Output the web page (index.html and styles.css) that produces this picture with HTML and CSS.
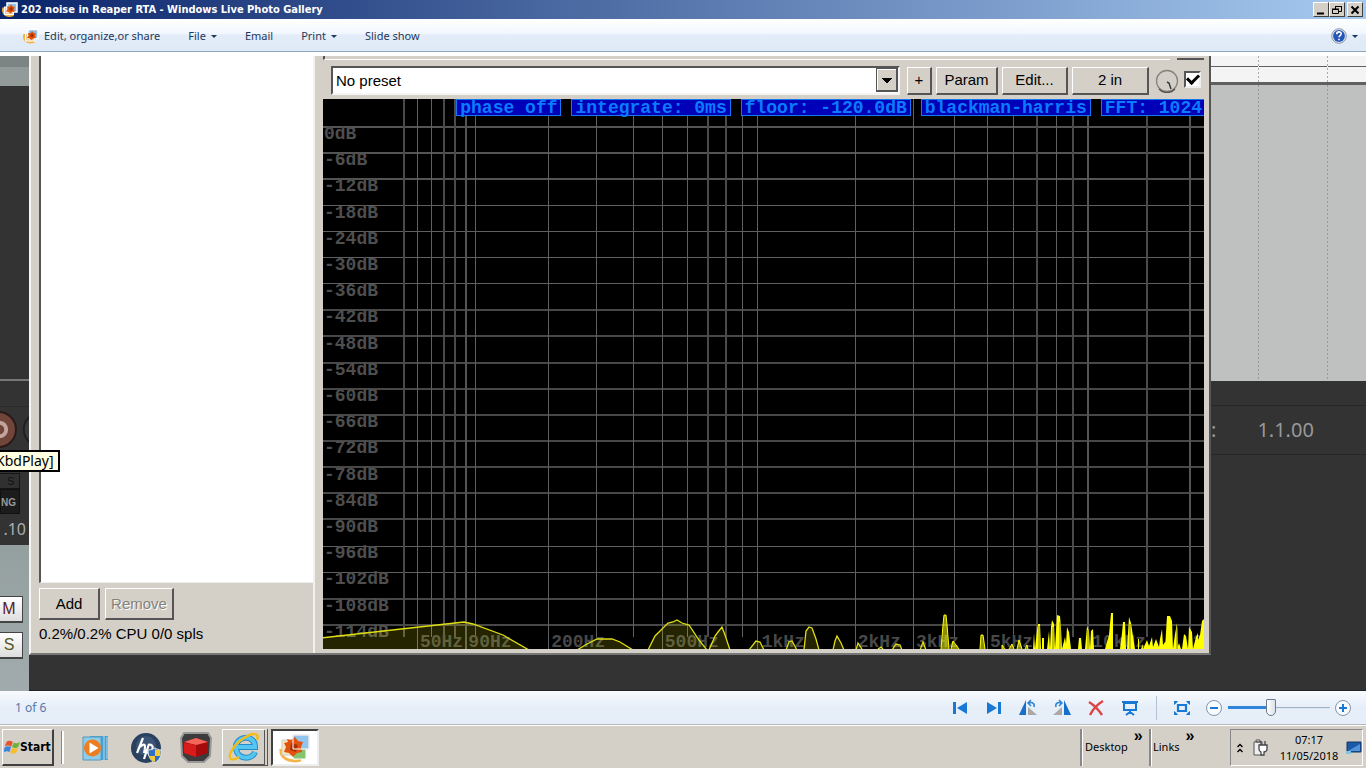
FILE: index.html
```html
<!DOCTYPE html>
<html lang="en">
<head>
<meta charset="utf-8">
<title>202 noise in Reaper RTA - Windows Live Photo Gallery</title>
<link rel="stylesheet" href="styles.css">
</head>
<body>
<svg class="defs" aria-hidden="true">
  <symbol id="gallery" viewBox="0 0 32 32">
    <path d="M3 12C-1 25 9 33 23 27" fill="none" stroke="#f0b23c" stroke-width="4"/>
    <rect x="5" y="11" width="18" height="15" fill="#e9c9a0" stroke="#fff" stroke-width="2"/>
    <rect x="10" y="3" width="20" height="18" fill="#8fc0ea" stroke="#fff" stroke-width="3"/>
    <path d="M10 10l5 0 3-4 4 4 4 1-2 4 2 5-5 1-4 3-4-3-5-1 3-5z" fill="#e0570c"/>
    <path d="M15 13l4-2 3 4-3 4-4-2z" fill="#a82d05"/>
  </symbol>
</svg>

<header class="titlebar">
  <svg class="title-icon"><use href="#gallery"/></svg>
  <h1 class="title">202 noise in Reaper RTA - Windows Live Photo Gallery</h1>
  <div class="win-buttons">
    <button class="win-btn" aria-label="Minimize"><svg viewBox="0 0 12 10"><path d="M2 8.500h7" stroke="#000" stroke-width="2"/></svg></button>
    <button class="win-btn" aria-label="Restore"><svg viewBox="0 0 12 10"><path d="M4.500 4V1.500h6v5H8M4 1.500h7M1.500 4.500h6v4h-6zM1 4h7" fill="none" stroke="#000"/></svg></button>
    <button class="win-btn close" aria-label="Close"><svg viewBox="0 0 12 10"><path d="M2.500 1.500l7 7m0-7l-7 7" stroke="#000" stroke-width="2"/></svg></button>
  </div>
</header>

<nav class="toolbar">
  <button class="tool"><svg class="tool-icon"><use href="#gallery"/></svg>Edit, organize,or share</button>
  <button class="tool">File<span class="caret"></span></button>
  <button class="tool">Email</button>
  <button class="tool">Print<span class="caret"></span></button>
  <button class="tool">Slide show</button>
  <button class="help" aria-label="Help">
    <svg viewBox="0 0 16 16" width="16" height="16"><circle cx="8" cy="8" r="7.300" fill="#dfe6ee" stroke="#8b97a8"/><circle cx="8" cy="8" r="5.900" fill="#2456ba"/><path d="M5.700 6.300C5.800 3 10.300 3.300 10.200 6 10.100 7.500 8 7.600 8 9.300M8 10.700v1.600" stroke="#fff" stroke-width="1.600" fill="none"/></svg>
    <span class="caret"></span>
  </button>
</nav>

<main class="stage">
  <aside class="left-strip">
    <div class="ls-top"></div>
    <div class="ls-head"></div>
    <div class="ls-dark"></div>
    <div class="ls-deck">
      <svg class="record" viewBox="0 0 29 46"><circle cx="-2" cy="23" r="18" fill="#70453a" stroke="#2a1a17" stroke-width="2"/><circle cx="-1" cy="23" r="7" fill="none" stroke="#c3a39b" stroke-width="4"/><circle cx="41" cy="23" r="17" fill="#3b3b3b" stroke="#1f1f1f" stroke-width="2"/></svg>
      <span class="deck-s">S</span>
      <span class="deck-ng">NG</span>
      <span class="deck-num">.10</span>
      <div class="tooltip">KbdPlay]</div>
    </div>
    <div class="ls-tracks">
      <button class="track-btn mute">M</button>
      <button class="track-btn solo">S</button>
    </div>
  </aside>

  <section class="fx-window">
    <div class="fx-left">
      <div class="fx-list"></div>
      <div class="fx-actions">
        <button class="btn add">Add</button>
        <button class="btn remove" disabled>Remove</button>
      </div>
      <p class="cpu">0.2%/0.2% CPU 0/0 spls</p>
    </div>
    <div class="fx-right">
      <div class="group-edge"><span class="edge-line"></span><span class="edge-btn"></span></div>
      <div class="preset-row">
        <select class="preset" aria-label="Preset"><option>No preset</option></select>
        <button class="btn plus">+</button>
        <button class="btn param">Param</button>
        <button class="btn edit">Edit...</button>
        <button class="btn two-in">2 in</button>
        <svg class="knob" viewBox="0 0 24 24"><circle cx="12" cy="12" r="10.500" fill="#d2cfc8" stroke="#85837e" stroke-width="1.300"/><path d="M4 20a11 11 0 0 0 16 0" fill="none" stroke="#55534f" stroke-width="1.500"/><path d="M12 13l2 1 2 6" fill="none" stroke="#333" stroke-width="1.400"/></svg>
        <input class="enable" type="checkbox" checked aria-label="Enable effect">
      </div>
      <div class="chart">
        <svg class="plot" viewBox="0 0 881 550" preserveAspectRatio="none">
          <g fill="none" stroke="#606060" shape-rendering="crispEdges">
            <path stroke="#545454" stroke-width="2" d="M0 28H881M0 54H881M0 80H881"/>
            <path d="M0 106.500H881M0 132.500H881M0 158.500H881M0 184.500H881"/>
            <path stroke="#484848" stroke-width="2" d="M0 211H881M0 237H881M0 264H881M0 290H881M0 316H881M0 342H881M0 368H881M0 394H881M0 420H881M0 500H881M0 526H881"/>
            <path d="M0 447.500H881M0 473.500H881"/>
            <path d="M108.500 0V538M152.500 0V538M273.500 0V538M310.500 0V538M364.500 0V538M419.500 0V538M631.500 0V538M690.500 0V538M733.500 0V538"/>
            <path stroke="#4a4a4a" stroke-width="2" d="M81 0V538M121 0V538M132 0V538M385 0V538M403 0V538M714 0V538M750 0V538M824 0V538"/>
            <path d="M94.500 0V550M225.500 0V550M339.500 0V550M434.500 0V550M532.500 0V550M590.500 0V550M664.500 0V550"/>
            <path stroke="#545454" stroke-width="2" d="M143 0V550M765 0V550M867 0V550"/>
          </g>
        </svg>
        <ul class="freq">
          <li style="left:11%">50Hz</li><li style="left:16.5%">90Hz</li><li style="left:25.9%">200Hz</li><li style="left:38.8%">500Hz</li><li style="left:49.8%">1kHz</li><li style="left:60.7%">2kHz</li><li style="left:67.3%">3kHz</li><li style="left:75.7%">5kHz</li><li style="left:87.3%">10kHz</li><li style="left:98.7%">2</li>
        </ul>
        <ol class="levels">
          <li>0dB</li><li>-6dB</li><li>-12dB</li><li>-18dB</li><li>-24dB</li><li>-30dB</li><li>-36dB</li><li>-42dB</li><li>-48dB</li><li>-54dB</li><li>-60dB</li><li>-66dB</li><li>-72dB</li><li>-78dB</li><li>-84dB</li><li>-90dB</li><li>-96dB</li><li>-102dB</li><li>-108dB</li><li>-114dB</li>
        </ol>
        <svg class="plot" viewBox="0 0 881 550" preserveAspectRatio="none">
          <g fill="#ffff00" fill-opacity=".14" stroke="#dede12" stroke-width="1.300">
            <path d="M-2 539L132 524L141 523L150 525L180 536L206 551H-2z"/>
            <path d="M254 551L264 545L274 540L289 540L297 543L310 551M325 551L332 537L345 524L350 523L354 521L359 524L366 526L376 541L384 551M386 551L392 537L395 533L399 528L402 536L407 551M426 551L433 542L437 543L441 551M463 551L466 543L469 542L474 551M481 551L483 532L486 528L489 529L493 540L496 551M510 551L512 542L514 537L518 544L521 551M533 551L535 544L539 550M555 550L558 548L560 550M569 551L573 545L577 546L579 551M597 551L600 543L603 551"/>
          </g>
          <path fill="#ffff00" fill-opacity=".55" stroke="#ffff00" stroke-width="1" d="M618 550L620 526L621 516H623L624 526L626 550M628 550L630 542L633 546L636 550M657 550L658 536H660L662 550M679 550V546L682 550M686 550L689 545L691 550M694 550L696 541L699 550M702 550L704 546L705 550"/>
          <path fill="#ffff00" d="M710 550L711 534L712 550L714 531L715 525H717L718 550H719V539H721V550H724L726 532L727 550L728 528L729 521L731 525L732 550L734 516L737 517L738 529L739 550L742 538L743 545L744 528L746 533L748 550H755L756 539H758L759 550H762L764 527L766 532L767 550L768 532L770 530L771 550H782L784 543L786 536L788 514H790V550H797L799 534L800 523H802L803 550H804L806 518L808 524L810 537L812 550H815V540H816V550H818L820 545V550L824 541L826 547L829 538L830 548L833 540L836 548L837 540L839 530L840 546L844 540L845 550H850L852 540V550H854L856 544L858 550H842L844 517H847L849 522L850 550L852 535L854 524L855 550H859L861 535L863 537L865 550L866 528L869 533L870 550L873 538L875 534V541L877 536L879 522L881 520V550z"/>
          <path fill="none" stroke="#858500" d="M716 527V550M730 528V550M737 523V550M765 531V550M807 525V550M854 529V550"/>
        </svg>
        <div class="chips">
          <button class="chip">phase off</button><button class="chip">integrate: 0ms</button><button class="chip">floor: -120.0dB</button><button class="chip">blackman-harris</button><button class="chip last">FFT: 1024</button>
        </div>
      </div>
    </div>
  </section>

  <aside class="right-strip">
    <div class="ruler"></div>
    <div class="arrange"></div>
    <div class="transport"><span>:</span><span>1.1.00</span></div>
  </aside>
  <div class="backdrop"></div>
</main>

<section class="controls">
  <span class="count">1 of 6</span>
  <button class="ctl" aria-label="Previous"><svg viewBox="0 0 20 20"><path d="M3 4h3v12H3zM17 4v12L7 10z" fill="#1878d6"/></svg></button>
  <button class="ctl" aria-label="Next"><svg viewBox="0 0 20 20"><path d="M14 4h3v12h-3zM3 4v12l10-6z" fill="#1878d6"/></svg></button>
  <button class="ctl" aria-label="Rotate left"><svg viewBox="0 0 20 20"><path d="M8 2v15H1z" fill="#176fc9"/><path d="M10 9l9 8h-9z" fill="#aaa9a8"/><path d="M16 9c1-4-2-5-5-4m2-3l-3 3 3 3" fill="none" stroke="#2782d8" stroke-width="1.500"/></svg></button>
  <button class="ctl" aria-label="Rotate right"><svg viewBox="0 0 20 20"><path d="M12 2v15h7z" fill="#176fc9"/><path d="M10 9l-9 8h9z" fill="#aaa9a8"/><path d="M4 9c-1-4 2-5 5-4M7 2l3 3-3 3" fill="none" stroke="#2782d8" stroke-width="1.500"/></svg></button>
  <button class="ctl" aria-label="Delete"><svg viewBox="0 0 20 20"><path d="M3 4c5 3 9 7 13 13M17 3C12 6 7 11 4 17" fill="none" stroke="#dc4545" stroke-width="2.400"/></svg></button>
  <button class="ctl" aria-label="Slide show"><svg viewBox="0 0 20 20"><path d="M2 4h16M4 5h12v7H4zM10 12v3M6 17l4-3 4 3" fill="none" stroke="#1878d6" stroke-width="2"/></svg></button>
  <span class="ctl-sep"></span>
  <button class="ctl fit" aria-label="Fit to window"><svg viewBox="0 0 20 20"><path d="M6 7h8v6H6z" fill="none" stroke="#1878d6" stroke-width="2.200"/><path d="M2 7V3h4L4.500 5zM18 7V3h-4l1.500 2zM2 13v4h4l-1.500-2zM18 13v4h-4l1.500-2z" fill="#1878d6"/></svg></button>
  <button class="zoom-btn" aria-label="Zoom out"><svg viewBox="0 0 18 18"><circle cx="9" cy="9" r="7.500" fill="#f8fbff" stroke="#8494ac"/><path d="M5 9h8" stroke="#1878d6" stroke-width="2"/></svg></button>
  <input class="zoom" type="range" min="0" max="100" value="41" aria-label="Zoom">
  <button class="zoom-btn" aria-label="Zoom in"><svg viewBox="0 0 18 18"><circle cx="9" cy="9" r="7.500" fill="#f8fbff" stroke="#8494ac"/><path d="M5 9h8M9 5v8" stroke="#1878d6" stroke-width="2"/></svg></button>
</section>

<footer class="taskbar">
  <button class="start"><svg viewBox="0 0 18 18"><path d="M3 3c3-2 4-1 7 0L8 9C6 7 4 7 1 8z" fill="#e5532d"/><path d="M11 4c2 1 4 1 7-1l-2 6c-3 2-4 1-7 0z" fill="#6bb13c"/><path d="M1 9c2-1 5-1 7 0l-2 6c-2-2-4-1-7 0z" fill="#3f86d8"/><path d="M9 10c2 1 4 1 7 0l-2 5c-2 2-5 2-7 0z" fill="#f5bd2a"/></svg>Start</button>
  <span class="grip"></span>
  <div class="quick">
    <button class="launch" aria-label="Media Player"><svg viewBox="0 0 32 32"><path d="M10 4h18v24H10z" fill="#4f9fce"/><path d="M24 4v24M27 5v22" stroke="#a9dcf4"/><path d="M3 5h18v23H3z" fill="#8dcdeb" stroke="#5299bd"/><circle cx="12.500" cy="16" r="8.500" fill="#ee7d20"/><path d="M9.500 10.500v11l9-5.500z" fill="#fff"/></svg></button>
    <button class="launch" aria-label="HP"><svg viewBox="0 0 32 32"><circle cx="16" cy="16" r="15" fill="#29415f"/><circle cx="16" cy="14" r="10" fill="#3c5577"/><path d="M13 6L7 21M10 15c5-5 6-2 4 6M19 12l-5 15M18 13c7-2 6 8-2 8" fill="none" stroke="#fff" stroke-width="2.200"/><path d="M18 18c3 0 5-1 7-2 2 1 4 2 6 2 1 7-2 10-6 13-5-3-7-7-7-13z" fill="#2f70c4" stroke="#e5e7e8"/><path d="M25 17v7h5c1-2 0-5 0-6-2 0-4 0-5-1M19 24h6v6c-3-1-5-3-6-6" fill="#f4ca35"/></svg></button>
    <button class="launch" aria-label="Studio"><svg viewBox="0 0 32 32"><path d="M4 1h24l3 5-1 18-6 6H8l-6-6L1 6z" fill="#3c3c3c" stroke="#999" stroke-width="2"/><path d="M4 10l12-4 12 4v11l-12 4-12-4z" fill="#a50a0c"/><path d="M4 10l12-4 12 4-12 3z" fill="#f5655a"/><path d="M4 11l12 2v12L4 21z" fill="#d71c1b"/></svg></button>
    <button class="launch open" aria-label="Internet Explorer"><svg viewBox="0 0 32 32"><path d="M27 21c-3 8-17 8-19-3C6 5 27 2 27 16H9" fill="none" stroke="#238bca" stroke-width="6"/><path d="M27 21c-3 8-17 8-19-3C6 5 27 2 27 16H9" fill="none" stroke="#55c6f2" stroke-width="4"/><path d="M29 9c3-8-5-7-13-2C6 13-1 25 3 28c2 1 5 0 8-2" fill="none" stroke="#f2bd18" stroke-width="2.500"/></svg></button>
    <button class="launch active" aria-label="Photo Gallery"><svg viewBox="0 0 32 32"><path d="M2 17c-1 9 8 14 20 11" fill="none" stroke="#f3b54b" stroke-width="3"/><path d="M3 8h14v15H3z" fill="#f8e6ba" stroke="#ccc"/><path d="M14 16h13v11H14z" fill="#82c56d" stroke="#fff"/><path d="M14 3h16v14H14z" fill="#91c5ee" stroke="#c2c2c2"/><path d="M8 7l4 1 4-3 3 4 5 1-2 5 1 5-5 1-4 4-4-4-5-1 2-5-2-4 4-1z" fill="#e35310"/><path d="M12 11l7 2-2 7-6-2z" fill="#a63308"/><path d="M14 3h16v14H14z" fill="none" stroke="#fff"/></svg></button>
  </div>
  <div class="band"><span>Desktop</span><button class="more" aria-label="More desktop items">»</button></div>
  <div class="band links"><span>Links</span><button class="more" aria-label="More links">»</button></div>
  <div class="tray">
    <svg class="chev" viewBox="0 0 8 12"><path d="M1.500 5L4 2.500 6.500 5M1.500 10L4 7.500 6.500 10" fill="none" stroke="#000" stroke-width="1.400"/></svg>
    <svg class="plug" viewBox="0 0 16 18"><path d="M2 3h8v13H2zM4 1h4v2H4z" fill="#eee" stroke="#555"/><path d="M7 6h8v4c0 2-2 3-3 3v3H9v-3c-2-1-2-2-2-3zM9 2v4M13 2v4" fill="#fff" stroke="#444" stroke-width="1.300"/></svg>
    <time class="clock">07:17<br>11/05/2018</time>
    <svg class="peek" viewBox="0 0 16 14"><path d="M1 1h14v10H1z" fill="#1c58a8" stroke="#16345c"/><path d="M2 10L14 3v7z" fill="#4f94d8"/><path d="M0 10h5v3H0z" fill="#7ec4dc"/></svg>
  </div>
</footer>
</body>
</html>
```
FILE: styles.css
```css
* { box-sizing: border-box; }
body { margin: 0; min-height: 100vh; display: flex; flex-direction: column; overflow: hidden; background: #d4d0c8; color: #000; font: 11px/16px "Noto Sans", sans-serif; }
button { margin: 0; padding: 0; border: 0; background: none; color: inherit; font: inherit; }
ul, ol { margin: 0; padding: 0; list-style: none; }
svg { display: block; flex: none; }
.defs { position: absolute; width: 0; height: 0; }

.titlebar { display: flex; align-items: center; height: 19px; padding: 0 3px 0 2px; background: linear-gradient(90deg, #0a246a, #a6caf0); }
.title-icon { width: 16px; height: 17px; }
.title { flex: 1; margin: 0 0 0 3px; color: #fff; font: bold 11px/18px "DejaVu Sans Condensed", sans-serif; }
.win-buttons { display: flex; }
.win-btn { display: grid; place-items: center; width: 16px; height: 15px; background: #d4d0c8; border: 1px solid; border-color: #fff #404040 #404040 #fff; }
.win-btn svg { width: 12px; height: 10px; }
.win-btn.close { margin-left: 2px; }

.toolbar { display: flex; align-items: center; gap: 28px; height: 33px; padding: 2px 8px 0 23px; background: linear-gradient(#fff, #f2f7fe 45%, #e3ecf8 50%, #dfeaf7); border-bottom: 1px solid #92a5bf; color: #1e395b; }
.tool { display: flex; align-items: center; font-size: 11px; }
.tool-icon { width: 16px; height: 16px; margin-right: 5px; }
.caret { margin-left: 5px; border: 3px solid transparent; border-top-color: #1e395b; border-bottom: 0; }
.help { display: flex; align-items: center; margin-left: auto; }

.stage { flex: 1; display: grid; grid-template: 1fr 36px / 29px 1fr 155px; padding-top: 4px; background: #fff; }
.left-strip { grid-row: 1 / 3; display: flex; flex-direction: column; min-width: 0; background: #333; }
.ls-top { height: 11px; background: #7c8484; }
.ls-head { height: 19px; background: #929a9a; }
.ls-dark { flex: 1; border-bottom: 2px solid #777; }
.ls-deck { position: relative; display: flex; flex-direction: column; align-items: flex-start; height: 164px; padding-top: 25px; background: #333; }
.record { width: 29px; height: 46px; border-top: 1px solid #292929; }
.deck-s { width: 20px; height: 16px; margin-top: 21px; padding-left: 7px; background: #303030; border: 1px solid #151515; border-left: 0; color: #111; font: 11px/14px "Liberation Sans", sans-serif; }
.deck-ng { width: 20px; height: 25px; background: #1c1c1c; border: 1px solid #111; color: #999; font: bold 10px/25px "Liberation Sans", sans-serif; }
.deck-num { width: 26px; margin-top: 5px; color: #a9aeb0; font: 16px/20px "Noto Sans", sans-serif; text-align: right; }
.tooltip { position: absolute; left: 0; top: 69px; z-index: 3; height: 22px; padding: 0 4px 0 0; background: #ffffe1; border: 2px solid #000; border-left: 0; font: 14px/18px "Noto Sans", sans-serif; text-indent: -4px; }
.ls-tracks { display: flex; flex-direction: column; gap: 9px; height: 146px; padding-top: 51px; background: linear-gradient(#949f9f, #a1abad); }
.track-btn { width: 23px; height: 27px; background: linear-gradient(#fff, #dedede); border: 1px solid #444; border-left: 0; border-bottom-width: 2px; font: 16px/22px "Liberation Sans", sans-serif; text-align: center; padding-right: 4px; }
.mute { color: #592020; }
.solo { color: #54571d; }

.fx-window { display: flex; min-width: 0; background: #d4d0c8; border-left: 2px solid #f6f5f2; border-right: 2px solid #555; border-bottom: 2px solid #777; }
.fx-left { display: flex; flex-direction: column; width: 284px; padding-left: 8px; border-right: 2px solid #f2f1ee; }
.fx-list { flex: 1; background: #fff; border: solid #555; border-width: 0 0 0 2px; border-bottom: 1px solid #eee; }
.fx-actions { display: flex; gap: 5px; padding-top: 5px; }
.btn { height: 32px; background: #d4d0c8; border: solid; border-width: 1px 2px 2px 1px; border-color: #fff #555 #555 #fff; font: 15px/28px "Liberation Sans", sans-serif; white-space: nowrap; }
.add { width: 61px; }
.remove { width: 69px; color: #85827c; text-shadow: 1px 1px #fff; }
.cpu { margin: 5px 0 10px; font: 15px/18px "Liberation Sans", sans-serif; }
.fx-right { flex: 1; display: flex; flex-direction: column; min-width: 0; padding: 0 5px 4px 8px; }
.group-edge { display: flex; height: 4px; }
.edge-line { flex: 1; margin-right: 7px; border-left: 2px solid #555; border-bottom: 1px solid #fff; }
.edge-btn { width: 27px; border-bottom: 2px solid #555; }
.preset-row { display: flex; align-items: center; gap: 4px; height: 39px; padding: 2px 3px 0 8px; }
.preset-row .btn { height: 28px; line-height: 24px; }
.preset { flex: 1; min-width: 0; height: 29px; margin-right: 3px; padding: 0 3px; appearance: none; border: solid; border-width: 2px; border-color: #555 #f5f5f5 #f5f5f5 #555; border-radius: 0; color: #000; font: 15px/24px "Liberation Sans", sans-serif;
  background:
    linear-gradient(#000, #000) right 6px top 10px / 10px 1px no-repeat,
    linear-gradient(#000, #000) right 7px top 11px / 8px 1px no-repeat,
    linear-gradient(#000, #000) right 8px top 12px / 6px 1px no-repeat,
    linear-gradient(#000, #000) right 9px top 13px / 4px 1px no-repeat,
    linear-gradient(#000, #000) right 10px top 14px / 2px 1px no-repeat,
    linear-gradient(#d4d0c8, #d4d0c8) right 2px top 2px / 18px 20px no-repeat,
    linear-gradient(#fff, #fff) right 2px top 1px / 19px 21px no-repeat,
    linear-gradient(#555, #555) right 0 top 0 / 22px 24px no-repeat,
    #fff; }
.plus { width: 25px; }
.param { width: 62px; }
.edit { width: 66px; }
.two-in { width: 77px; }
.knob { width: 24px; height: 24px; margin-left: 2px; }
.enable { appearance: none; width: 17px; height: 17px; margin: 0 0 2px 1px; background: #fff; border: 2px solid; border-color: #555 #eee #eee #555; display: grid; place-items: center; }
.enable:checked::before { content: ""; width: 9px; height: 5px; margin-bottom: 3px; border: solid #000; border-width: 0 0 3px 3px; transform: rotate(-45deg); }

.chart { position: relative; flex: 1; min-height: 550px; overflow: hidden; background: #000; font: bold 18px/16px "Liberation Mono", monospace; }
.plot { position: absolute; inset: 0; width: 100%; height: 100%; }
.levels { position: absolute; top: 27px; bottom: 9px; left: 1px; display: flex; flex-direction: column; justify-content: space-between; color: #4e4e4e; }
.freq { position: absolute; left: 0; right: 0; bottom: 0; height: 16px; color: #484848; }
.freq li { position: absolute; bottom: 0; line-height: 14px; }
.chips { position: relative; display: flex; justify-content: flex-end; gap: 10px; }
.chip { height: 17px; padding: 0 3px; background: #0000b8; border: 1px solid #1678f0; color: #0a7cff; font: bold 18px/14px "Liberation Mono", monospace; white-space: nowrap; }
.chip.last { padding-right: 2px; border-right: 0; }

.right-strip { display: flex; flex-direction: column; background: #333; }
.ruler { height: 29px; border-bottom: 3px solid #606060; background: repeating-linear-gradient(#aaa 0 2px, #f4f4f4 2px 4px) 47px 0 / 1px 26px no-repeat, repeating-linear-gradient(#aaa 0 2px, #f4f4f4 2px 4px) 116px 0 / 1px 26px no-repeat, linear-gradient(#f4f4f4 10px, #606060 10px 11px, #f4f4f4 11px); }
.arrange { flex: 1; background: repeating-linear-gradient(#999 0 2px, #bfc1c0 2px 4px) 47px 0 / 1px 100% no-repeat, repeating-linear-gradient(#999 0 2px, #bfc1c0 2px 4px) 116px 0 / 1px 100% no-repeat, #bfc1c0; }
.transport { display: flex; align-items: center; gap: 41px; height: 50px; margin: 24px 0 200px; border-top: 1px solid #272727; border-bottom: 1px solid #272727; color: #999; font: 20px/24px "Noto Sans", sans-serif; }
.backdrop { grid-column: 2 / 4; background: #333; border-bottom: 1px solid #222; }

.controls { display: flex; align-items: center; height: 34px; padding: 0 14px 0 15px; background: linear-gradient(#f8fbff, #e6eef8 50%, #e6eff9); border-bottom: 1px solid #b5b9bd; }
.count { margin-right: auto; color: #5879ab; font-size: 12px; }
.ctl { width: 20px; height: 20px; margin-right: 14px; }
.ctl-sep { width: 1px; height: 24px; margin: 0 15px 0 2px; background: #b3c2d4; }
.ctl.fit { margin-right: 13px; }
.zoom-btn { width: 18px; height: 18px; }
.zoom { width: 102px; height: 22px; margin: 0 4px 0 5px; appearance: none; background: linear-gradient(90deg, #2e86dc 40%, transparent 40%) center / 100% 3px no-repeat, linear-gradient(#7d98bd, #fff) center / 100% 2px no-repeat; }
.zoom::-webkit-slider-thumb { appearance: none; width: 10px; height: 17px; background: linear-gradient(90deg, #fff, #dbe2e9); border: 1px solid #6d7b8e; border-radius: 1px 1px 5px 5px; }

.taskbar { display: flex; align-items: stretch; height: 43px; padding: 3px 3px 2px 2px; background: #d4d0c8; border-top: 1px solid #fff; }
.start { display: flex; align-items: center; width: 52px; padding-left: 1px; border: solid; border-width: 1px 2px 2px 1px; border-color: #fff #404040 #404040 #fff; font: bold 12px/16px "DejaVu Sans Condensed", sans-serif; }
.start svg { width: 16px; height: 16px; }
.grip { width: 3px; margin: 2px 8px 2px 7px; border-left: 1px solid #888; border-right: 2px solid #fff; }
.quick { display: flex; gap: 3px; }
.launch { display: grid; place-items: center; width: 47px; }
.launch svg { width: 32px; height: 32px; }
.launch.open { width: 46px; border: solid; border-width: 1px 4px 2px 1px; border-color: #fff #555 #555 #fff; border-right-style: double; }
.launch.active { width: 48px; background: #fff; border: 2px solid; border-color: #404040 #eee #eee #404040; }
.band { display: flex; width: 69px; padding-left: 3px; line-height: 36px; border-left: 2px solid #888; box-shadow: inset 1px 0 #fff; }
.quick + .band { margin-left: auto; }
.band.links { width: 81px; padding-left: 2px; }
.more { margin-left: 6px; align-self: flex-start; font: bold 16px/14px "Liberation Sans", sans-serif; }
.tray { display: flex; align-items: center; width: 133px; padding-left: 5px; border: 1px solid; border-color: #888 #fff #fff #888; }
.chev { width: 8px; height: 12px; }
.plug { width: 16px; height: 18px; margin-left: 8px; }
.clock { flex: 1; padding-left: 4px; text-align: center; }
.peek { width: 16px; height: 14px; }
```
